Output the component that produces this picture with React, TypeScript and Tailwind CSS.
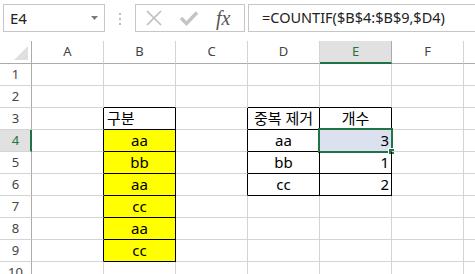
// Excel-style sheet: name box, formula bar and a small COUNTIF grid
const GRID = 'border-r-[#d4d4d4]'
const GRID_B = 'border-b-[#d4d4d4]'

const cols = ['A', 'B', 'C', 'D', 'E', 'F', 'G']
const rows = [1, 2, 3, 4, 5, 6, 7, 8, 9, 10]

type Cell = { v: string; align: 'left' | 'center' | 'right'; yellow?: boolean }

const data: Record<string, Cell> = {
  B3: { v: '구분', align: 'left' },
  B4: { v: 'aa', align: 'center', yellow: true },
  B5: { v: 'bb', align: 'center', yellow: true },
  B6: { v: 'aa', align: 'center', yellow: true },
  B7: { v: 'cc', align: 'center', yellow: true },
  B8: { v: 'aa', align: 'center', yellow: true },
  B9: { v: 'cc', align: 'center', yellow: true },
  D3: { v: '중복 제거', align: 'center' },
  E3: { v: '개수', align: 'center' },
  D4: { v: 'aa', align: 'center' },
  D5: { v: 'bb', align: 'center' },
  D6: { v: 'cc', align: 'center' },
  E4: { v: '3', align: 'right' },
  E5: { v: '1', align: 'right' },
  E6: { v: '2', align: 'right' },
}

// black outline for B3:B9 and D3:E6, light gridlines elsewhere
const inB = (c: string, r: number) => c === 'B' && r >= 3 && r <= 9
const inD = (c: string, r: number) => (c === 'D' || c === 'E') && r >= 3 && r <= 6

function rightColor(c: string, r: number) {
  if (inB(c, r) || inD(c, r)) return 'border-r-black'
  if (c === 'A' && r >= 3 && r <= 9) return 'border-r-black'
  if (c === 'C' && r >= 3 && r <= 6) return 'border-r-black'
  return GRID
}

function bottomColor(c: string, r: number) {
  if (inB(c, r) || inD(c, r)) return 'border-b-black'
  if (c === 'B' && r === 2) return 'border-b-black'
  if ((c === 'D' || c === 'E') && r === 2) return 'border-b-black'
  return GRID_B
}

const alignCls = {
  left: 'justify-start pl-[3px]',
  center: 'justify-center',
  right: 'justify-end pr-[2px]',
}

function FormulaBar() {
  return (
    <div className="flex h-[41px] items-start pt-[4px] bg-white">
      {/* name box */}
      <div className="ml-[3px] flex h-[28px] w-[102px] items-center justify-between border border-[#c6c6c6] pl-[6px] pr-[5px] text-[15px] text-[#222]">
        <span>E4</span>
        <svg width="8" height="4" viewBox="0 0 8 4">
          <path d="M0 0h7L3.5 4z" fill="#7a7a7a" />
        </svg>
      </div>
      {/* grip dots */}
      <div className="flex w-[30px] flex-col items-center gap-[3px] pt-[9px]">
        <span className="h-[2px] w-[2px] bg-[#bcbcbc]" />
        <span className="h-[2px] w-[2px] bg-[#bcbcbc]" />
        <span className="h-[2px] w-[2px] bg-[#bcbcbc]" />
      </div>
      {/* cancel / enter / fx */}
      <div className="flex h-[28px] w-[110px] items-center border border-[#c6c6c6] pl-[9px]">
        <svg width="18" height="18" viewBox="0 0 18 18">
          <path d="M2 2l14 14M16 2L2 16" stroke="#bdbdbd" strokeWidth="1.6" />
        </svg>
        <svg className="ml-[17px]" width="18" height="16" viewBox="0 0 18 16">
          <path d="M1 8l5.5 5.5L17 2.5" stroke="#c4c4c4" strokeWidth="3.5" fill="none" />
        </svg>
        <span className="ml-[18px] font-['Liberation_Serif'] text-[20px] italic leading-none text-[#555]">
          fx
        </span>
      </div>
      {/* formula input */}
      <div className="ml-[3px] flex h-[28px] flex-1 items-center border border-r-0 border-[#c6c6c6] pl-[13px] text-[14.5px] text-[#222]">
        =COUNTIF($B$4:$B$9,$D4)
      </div>
    </div>
  )
}

export default function App() {
  return (
    <div className="h-[274px] w-[475px] overflow-hidden bg-white font-['Noto_Sans','Noto_Sans_CJK_KR',sans-serif]">
      <FormulaBar />
      <div className="grid grid-cols-[32px_repeat(7,72px)] grid-rows-[23px_repeat(10,22px)]">
        {/* corner */}
        <div className="relative border-r border-b border-r-[#ababab] border-b-[#ababab]">
          <svg className="absolute left-[14px] top-[5px]" width="14" height="14" viewBox="0 0 14 14">
            <path d="M14 0v14H0z" fill="#dfdfdf" />
          </svg>
        </div>
        {cols.map((c) =>
          c === 'E' ? (
            <div
              key={c}
              className="flex items-center justify-center border-r border-b-2 border-r-[#ababab] border-b-[#217346] bg-[#e1e1e1] pt-[1px] text-[13px] text-[#217346]"
            >
              {c}
            </div>
          ) : (
            <div
              key={c}
              className="flex items-center justify-center border-r border-b border-r-[#d4d4d4] border-b-[#ababab] text-[13px] text-[#444]"
            >
              {c === 'G' ? '' : c}
            </div>
          )
        )}
        {rows.map((r) => (
          <Row key={r} r={r} />
        ))}
      </div>
    </div>
  )
}

function Row({ r }: { r: number }) {
  const active = r === 4
  return (
    <>
      <div
        className={
          active
            ? 'flex items-center justify-center border-r-2 border-b border-r-[#217346] border-b-[#d4d4d4] bg-[#e1e1e1] pl-[1px] text-[13px] text-[#217346]'
            : 'flex items-center justify-center border-r border-b border-r-[#ababab] border-b-[#d4d4d4] text-[13px] text-[#444]'
        }
      >
        {r}
      </div>
      {cols.map((c) => {
        const id = c + r
        const cell = data[id]
        const selected = id === 'E4'
        return (
          <div
            key={id}
            className={`relative flex items-center border-r border-b text-[15px] leading-[21px] text-black ${rightColor(c, r)} ${bottomColor(c, r)} ${
              cell?.yellow ? 'bg-[#ffff00]' : selected ? 'bg-[#dce1f0]' : ''
            } ${cell ? alignCls[cell.align] : ''}`}
          >
            {cell?.v}
            {selected && (
              <>
                <div className="absolute -left-[2px] -top-[2px] h-[25px] w-[75px] border-2 border-[#217346]" />
                <div className="absolute -right-[4px] -bottom-[4px] h-[7px] w-[7px] border border-white bg-[#217346]" />
              </>
            )}
          </div>
        )
      })}
    </>
  )
}
